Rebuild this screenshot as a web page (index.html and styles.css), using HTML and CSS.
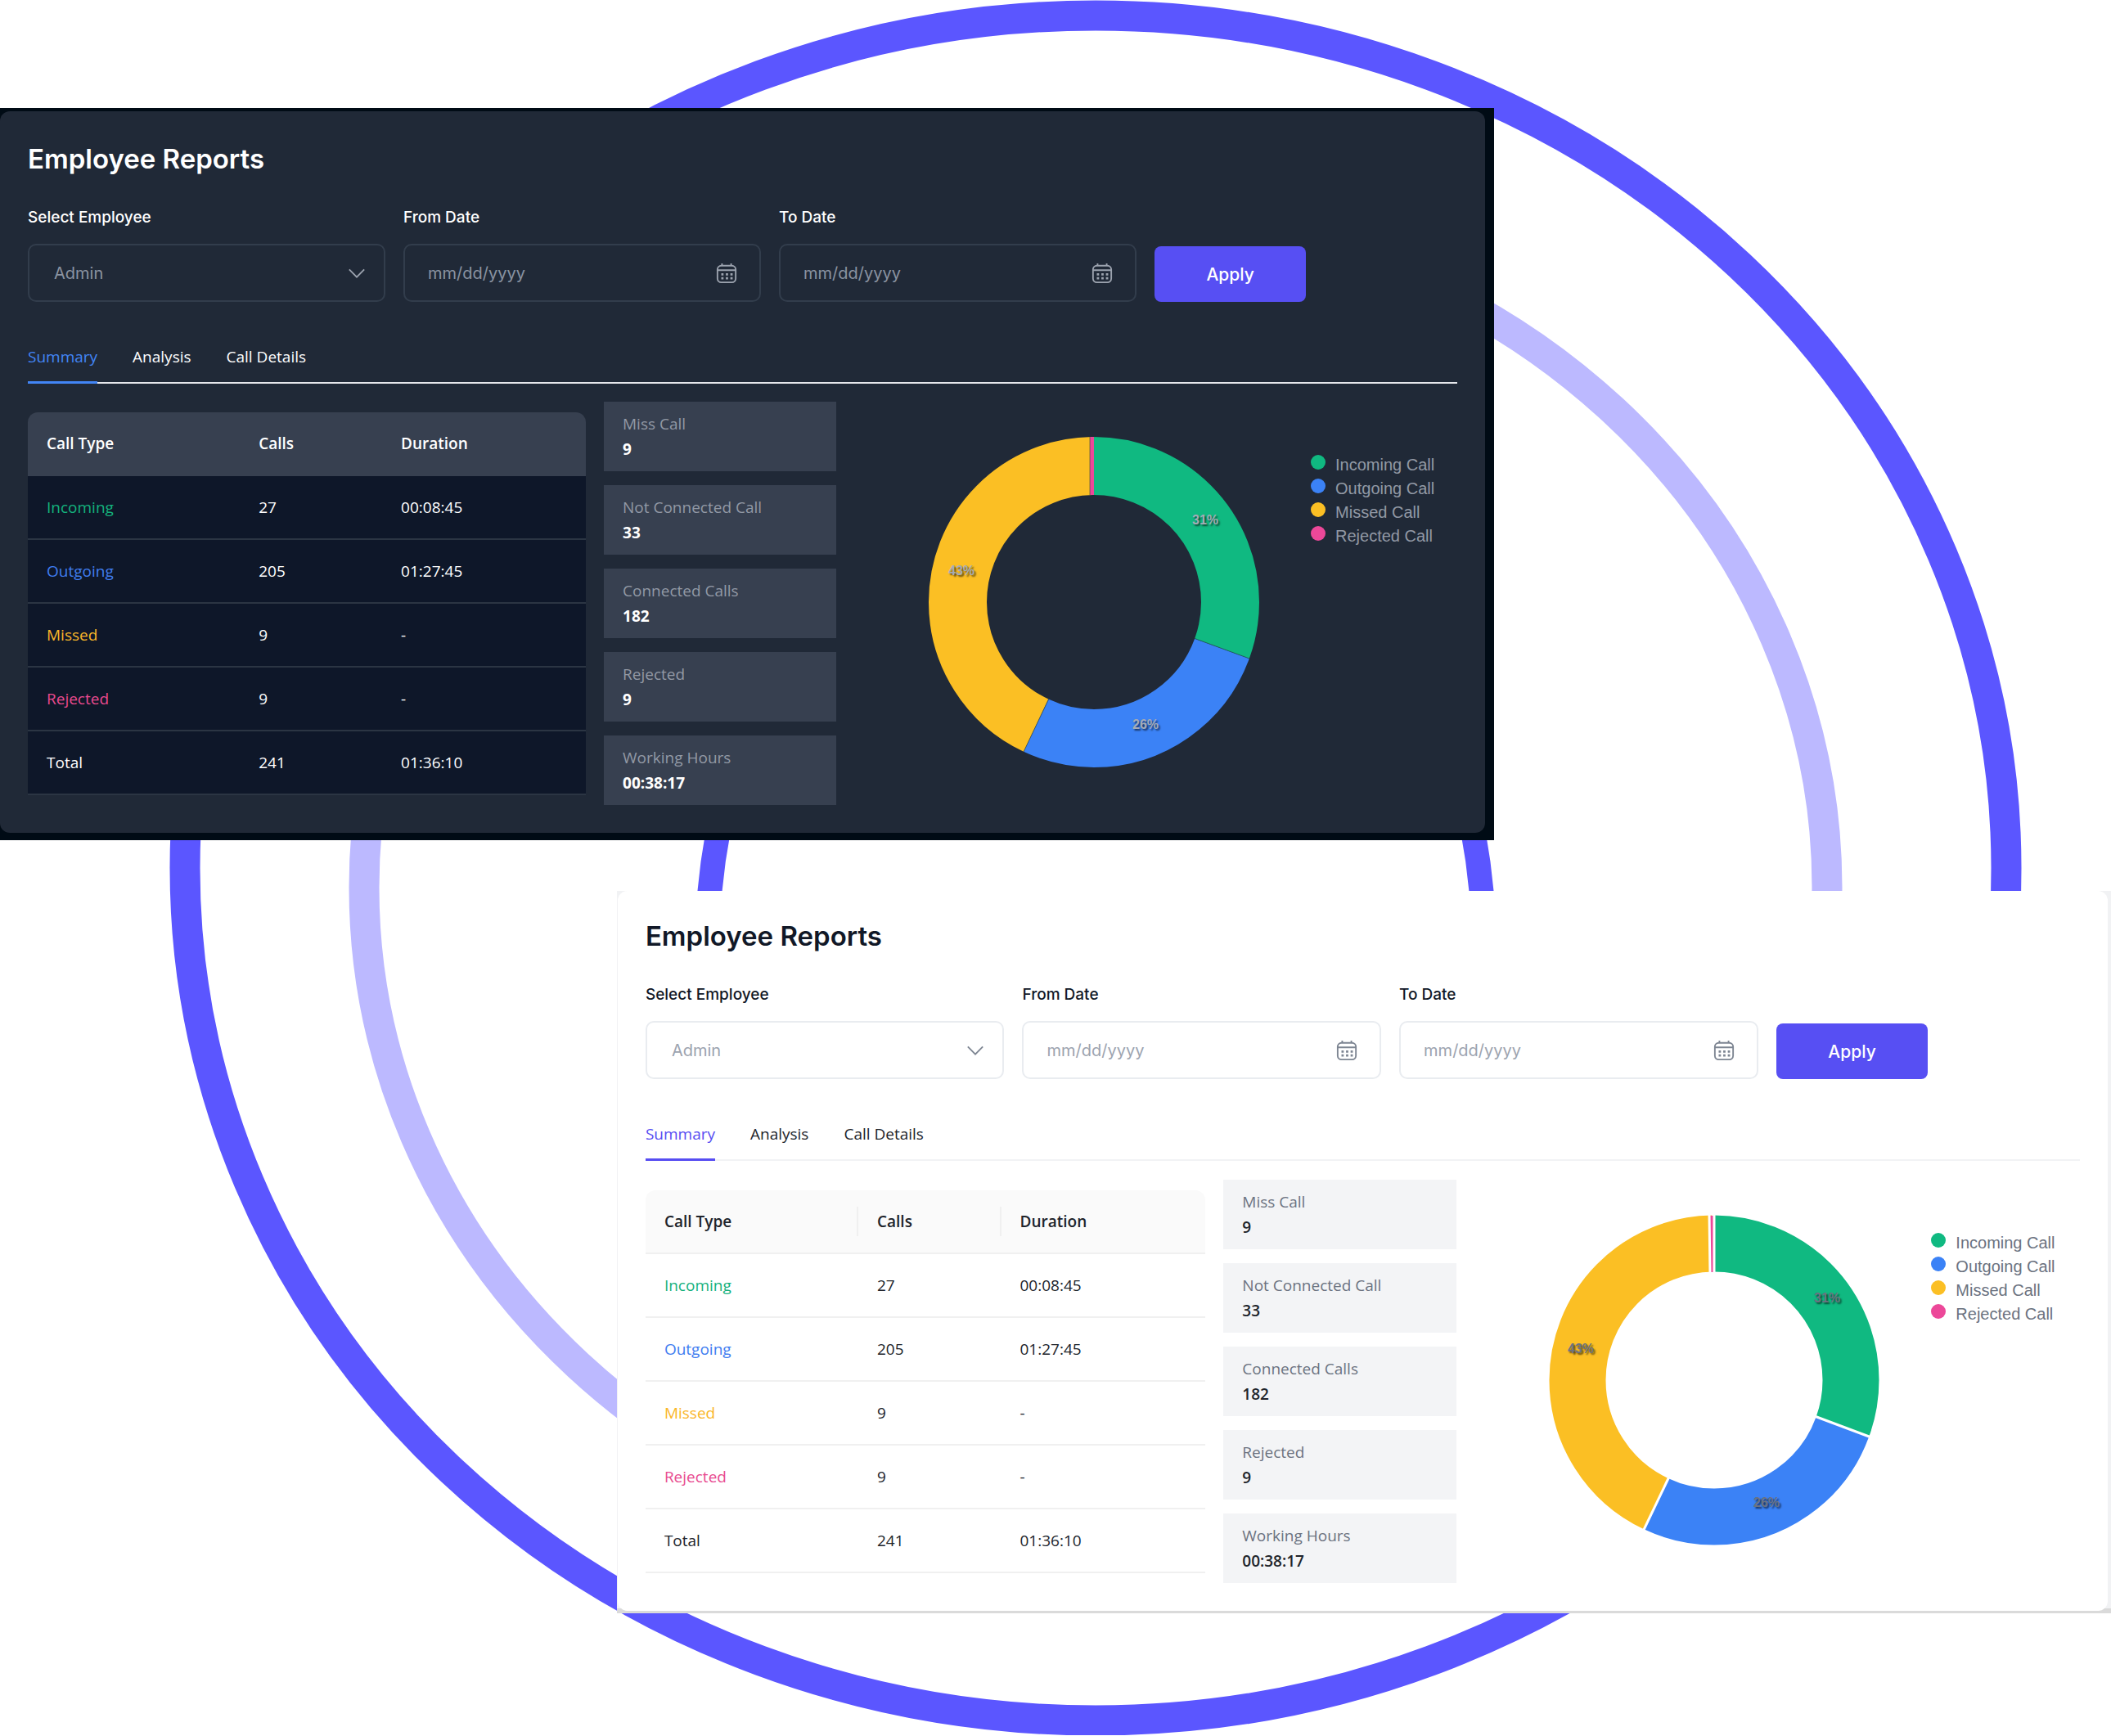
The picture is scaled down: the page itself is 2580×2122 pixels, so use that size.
FILE: index.html
```html
<!DOCTYPE html>
<html lang="en">
<head>
<meta charset="utf-8">
<meta name="viewport" content="width=device-width, initial-scale=1">
<title>Employee Reports</title>
<link rel="stylesheet" href="styles.css">
</head>
<body>
<svg class="sprite" aria-hidden="true">
  <symbol id="chevron" viewBox="0 0 24 14"><path d="M2 2l10 10 10-10"/></symbol>
  <symbol id="calendar" viewBox="0 0 28 28">
    <rect x="2" y="4" width="24" height="22" rx="5"/>
    <path d="M2 10h24M8 1v3M20 1v3"/>
    <path class="dots" d="M7 14h3v3H7zM13 14h3v3h-3zM19 14h3v3h-3zM7 19h3v3H7zM13 19h3v3h-3zM19 19h3v3h-3z"/>
  </symbol>
</svg>
<main class="showcase">
  <svg class="rings" viewBox="0 0 2580 2122" aria-hidden="true">
    <ellipse class="ring-strong" cx="1339" cy="1061" rx="1113" ry="1042" stroke-width="37"/>
    <ellipse class="ring-soft" cx="1339" cy="1085" rx="894" ry="826" stroke-width="37"/>
    <ellipse class="ring-strong" cx="1339" cy="1166" rx="475" ry="628" stroke-width="30"/>
  </svg>

  <section class="panel dark">
    <div class="card">
      <h2>Employee Reports</h2>
      <form class="filters">
        <div class="field">
          <label for="d-emp">Select Employee</label>
          <div class="control"><select id="d-emp"><option>Admin</option></select><svg class="chevron"><use href="#chevron"/></svg></div>
        </div>
        <div class="field">
          <label for="d-from">From Date</label>
          <div class="control"><input id="d-from" type="text" placeholder="mm/dd/yyyy"><svg class="calendar"><use href="#calendar"/></svg></div>
        </div>
        <div class="field">
          <label for="d-to">To Date</label>
          <div class="control"><input id="d-to" type="text" placeholder="mm/dd/yyyy"><svg class="calendar"><use href="#calendar"/></svg></div>
        </div>
        <button type="button">Apply</button>
      </form>
      <nav class="tabs"><a class="active" href="#summary">Summary</a><a href="#analysis">Analysis</a><a href="#details">Call Details</a></nav>
      <div class="report">
        <table>
          <thead><tr><th class="type">Call Type</th><th class="calls">Calls</th><th>Duration</th></tr></thead>
          <tbody>
            <tr><td class="incoming">Incoming</td><td>27</td><td>00:08:45</td></tr>
            <tr><td class="outgoing">Outgoing</td><td>205</td><td>01:27:45</td></tr>
            <tr><td class="missed">Missed</td><td>9</td><td>-</td></tr>
            <tr><td class="rejected">Rejected</td><td>9</td><td>-</td></tr>
            <tr><td>Total</td><td>241</td><td>01:36:10</td></tr>
          </tbody>
        </table>
        <dl class="stats">
          <div><dt>Miss Call</dt><dd>9</dd></div>
          <div><dt>Not Connected Call</dt><dd>33</dd></div>
          <div><dt>Connected Calls</dt><dd>182</dd></div>
          <div><dt>Rejected</dt><dd>9</dd></div>
          <div><dt>Working Hours</dt><dd>00:38:17</dd></div>
        </dl>
        <div class="chart">
          <svg class="donut" viewBox="-202 -202 404 404" role="img" aria-label="Calls by type">
            <g class="slices" transform="rotate(-90)">
              <circle r="166.5" pathLength="360" stroke="#10b981" stroke-dasharray="110 250"/>
              <circle r="166.5" pathLength="360" stroke="#3b82f6" stroke-dasharray="95.2 264.8" stroke-dashoffset="-110"/>
              <circle r="166.5" pathLength="360" stroke="#fbbf24" stroke-dasharray="154 206" stroke-dashoffset="-205.2"/>
            </g>
            <path class="sliver" d="M-5 -131V-202H0V-131Z"/>
            <path class="gaps" d="M122 44L190 69M-55 118L-86 183M-5 -131V-202"/>
            <g class="shares"><text x="136" y="-95">31%</text><text x="63" y="155">26%</text><text x="-162" y="-33">43%</text></g>
          </svg>
          <ul class="legend">
            <li class="l-incoming">Incoming Call</li><li class="l-outgoing">Outgoing Call</li><li class="l-missed">Missed Call</li><li class="l-rejected">Rejected Call</li>
          </ul>
        </div>
      </div>
    </div>
  </section>

  <section class="panel light">
    <div class="card">
      <h2>Employee Reports</h2>
      <form class="filters">
        <div class="field">
          <label for="l-emp">Select Employee</label>
          <div class="control"><select id="l-emp"><option>Admin</option></select><svg class="chevron"><use href="#chevron"/></svg></div>
        </div>
        <div class="field">
          <label for="l-from">From Date</label>
          <div class="control"><input id="l-from" type="text" placeholder="mm/dd/yyyy"><svg class="calendar"><use href="#calendar"/></svg></div>
        </div>
        <div class="field">
          <label for="l-to">To Date</label>
          <div class="control"><input id="l-to" type="text" placeholder="mm/dd/yyyy"><svg class="calendar"><use href="#calendar"/></svg></div>
        </div>
        <button type="button">Apply</button>
      </form>
      <nav class="tabs"><a class="active" href="#summary">Summary</a><a href="#analysis">Analysis</a><a href="#details">Call Details</a></nav>
      <div class="report">
        <table>
          <thead><tr><th class="type"><span>Call Type</span></th><th class="calls"><span>Calls</span></th><th>Duration</th></tr></thead>
          <tbody>
            <tr><td class="incoming">Incoming</td><td>27</td><td>00:08:45</td></tr>
            <tr><td class="outgoing">Outgoing</td><td>205</td><td>01:27:45</td></tr>
            <tr><td class="missed">Missed</td><td>9</td><td>-</td></tr>
            <tr><td class="rejected">Rejected</td><td>9</td><td>-</td></tr>
            <tr><td>Total</td><td>241</td><td>01:36:10</td></tr>
          </tbody>
        </table>
        <dl class="stats">
          <div><dt>Miss Call</dt><dd>9</dd></div>
          <div><dt>Not Connected Call</dt><dd>33</dd></div>
          <div><dt>Connected Calls</dt><dd>182</dd></div>
          <div><dt>Rejected</dt><dd>9</dd></div>
          <div><dt>Working Hours</dt><dd>00:38:17</dd></div>
        </dl>
        <div class="chart">
          <svg class="donut" viewBox="-202 -202 404 404" role="img" aria-label="Calls by type">
            <g class="slices" transform="rotate(-90)">
              <circle r="167" pathLength="360" stroke="#10b981" stroke-dasharray="110 250"/>
              <circle r="167" pathLength="360" stroke="#3b82f6" stroke-dasharray="95.2 264.8" stroke-dashoffset="-110"/>
              <circle r="167" pathLength="360" stroke="#fbbf24" stroke-dasharray="154 206" stroke-dashoffset="-205.2"/>
            </g>
            <path class="sliver" d="M-5 -132V-201H0V-132Z"/>
            <path class="gaps" d="M120 43L192 70M-54 116L-87 185M-5 -131L-6 -203M0 -131V-203"/>
            <g class="shares"><text x="138" y="-95">31%</text><text x="64" y="155">26%</text><text x="-163" y="-33">43%</text></g>
          </svg>
          <ul class="legend">
            <li class="l-incoming">Incoming Call</li><li class="l-outgoing">Outgoing Call</li><li class="l-missed">Missed Call</li><li class="l-rejected">Rejected Call</li>
          </ul>
        </div>
      </div>
    </div>
  </section>
</main>
</body>
</html>
```
FILE: styles.css
```css
*, *::before, *::after { box-sizing: border-box; }

body {
  margin: 0;
  background: #fff;
  font: 19px/28px "Open Sans", "Noto Sans", sans-serif;
}

h2, dl, dd, ul { margin: 0; padding: 0; }

.sprite { position: absolute; width: 0; height: 0; }

.showcase {
  position: relative;
  display: flex;
  flex-direction: column;
  gap: 62px;
  padding: 132px 0 149px;
  overflow: hidden;
}

/* Decorative rings behind the two panels */
.rings { position: absolute; top: 0; left: 0; width: 100%; }
.rings ellipse { fill: none; }
.ring-strong { stroke: #5b56ff; }
.ring-soft { stroke: #bcb9ff; }

.panel { position: relative; width: 70.78%; }

.dark {
  --surface: #202937;
  --text: #fff;
  --heading: #fff;
  --muted: #9299a5;
  --placeholder: #8a93a1;
  --icon: #9ca3af;
  --field-border: #323d4c;
  --accent: #4285f6;
  --rule: #e5e7eb;
  --head: #374050;
  --row: #0e1729;
  --line: #2b3543;
  --tile: #374050;
  --share: #a5abb5;
  background: #000b15;
  padding: 4px 11px 9px 0;
}
.light {
  --surface: #fff;
  --text: #20242b;
  --heading: #111827;
  --muted: #6b7280;
  --placeholder: #9ca3af;
  --icon: #7d8592;
  --field-border: #e9ecf0;
  --accent: #574df2;
  --rule: #f2f3f5;
  --head: #fafafa;
  --row: #fff;
  --line: #f0f0f0;
  --tile: #f3f4f6;
  --share: #6b7280;
  align-self: flex-end;
  background: linear-gradient(#f1f2f4 0 calc(100% - 6px), #dadada calc(100% - 6px));
  padding: 0 4px 3px 1px;
}

.card {
  padding: 38px 34px 34px;
  border-radius: 12px;
  background: var(--surface);
  color: var(--text);
}
.light .card { padding-top: 35px; }

h2 {
  color: var(--heading);
  font: 600 33px/40px Inter, "Open Sans", sans-serif;
}

.filters {
  display: grid;
  grid-template-columns: 437fr 437fr 437fr 185fr 163fr;
  align-items: end;
  gap: 22px;
  margin-top: 38px;
  font-family: Inter, "Open Sans", sans-serif;
}
.field { display: grid; gap: 18px; }
.field label { color: var(--heading); font-weight: 500; }

.control { display: grid; align-items: center; }
.control > * { grid-area: 1 / 1; }
.control input, .control select {
  width: 100%;
  height: 71px;
  padding: 0 28px;
  border: 2px solid var(--field-border);
  border-radius: 10px;
  background: transparent;
  color: var(--placeholder);
  font: 20px/28px Inter, "Open Sans", sans-serif;
  appearance: none;
}
.control select { padding: 0 30px; }
.control input::placeholder { color: var(--placeholder); opacity: 1; }
.control svg {
  justify-self: end;
  fill: none;
  stroke: var(--icon);
  stroke-width: 2;
  pointer-events: none;
}
.chevron { width: 22px; height: 14px; margin-right: 24px; }
.calendar { width: 26px; height: 28px; margin-right: 29px; }
.dots { fill: var(--icon); stroke: none; }

button {
  height: 68px;
  padding: 2px 0 0;
  border: 0;
  border-radius: 8px;
  background: #574ff3;
  color: #fff;
  font: 500 21px/28px Inter, "Open Sans", sans-serif;
}

.tabs {
  display: flex;
  gap: 43px;
  margin-top: 53px;
  box-shadow: inset 0 -2px var(--rule);
}
.tabs a {
  padding-bottom: 16px;
  border-bottom: 3px solid transparent;
  color: var(--text);
  text-decoration: none;
}
.tabs .active { border-color: var(--accent); color: var(--accent); }

.report {
  display: grid;
  grid-template-columns: 682fr 284fr 737fr;
  align-items: start;
  gap: 22px;
  margin-top: 22px;
}
.light .report { margin-top: 23px; }

table {
  width: 100%;
  margin-top: 13px;
  border-collapse: separate;
  border-spacing: 0;
  table-layout: fixed;
}
th, td {
  height: 78px;
  padding: 0 23px;
  border-bottom: 2px solid var(--line);
  background: var(--row);
  text-align: left;
}
th { background: var(--head); border-color: var(--head); font-weight: 600; }
.light th { border-color: var(--line); }
th:first-child { border-top-left-radius: 12px; }
th:last-child { border-top-right-radius: 12px; }
.type { width: 38%; }
.calls { width: 25.5%; }
th span {
  display: block;
  margin-right: -23px;
  border-right: 2px solid var(--line);
  line-height: 36px;
}
.incoming { color: #14b17d; }
.outgoing { color: #3f7df0; }
.missed { color: #fab629; }
.rejected { color: #e84a8f; }

.stats { display: grid; gap: 17px; }
.stats div { height: 85px; padding: 12px 23px; background: var(--tile); line-height: 31px; }
.stats dt { color: var(--muted); }
.stats dd { font-weight: 700; }
.light .stats dd { font-weight: 600; }

.chart { display: flex; align-items: flex-start; padding: 43px 0 0 91px; }
.donut { flex: 0 1 404px; min-width: 0; overflow: visible; }
.slices circle { fill: none; stroke-width: 71; }
.light .slices circle { stroke-width: 69; }
.sliver { fill: #ec4899; }
.gaps { fill: none; stroke: #27403f; stroke-width: 1; opacity: .6; }
.light .gaps { stroke: #fff; stroke-width: 3; opacity: 1; }
.shares text {
  fill: var(--share);
  font: 700 16px "Liberation Sans", Arial, sans-serif;
  text-anchor: middle;
  text-shadow: 2px 2px 2px rgba(0, 0, 0, .6);
}

.legend {
  display: grid;
  gap: 1px;
  margin: 20px 0 0 63px;
  color: var(--muted);
  font: 20px/28px "Liberation Sans", Arial, sans-serif;
  list-style: none;
  white-space: nowrap;
}
.legend li { display: flex; gap: 12px; }
.legend li::before {
  content: "";
  width: 18px;
  height: 18px;
  margin-top: 2px;
  border-radius: 50%;
  background: currentColor;
}
.l-incoming::before { color: #10b981; }
.l-outgoing::before { color: #3b82f6; }
.l-missed::before { color: #fbbf24; }
.l-rejected::before { color: #ec4899; }
```
